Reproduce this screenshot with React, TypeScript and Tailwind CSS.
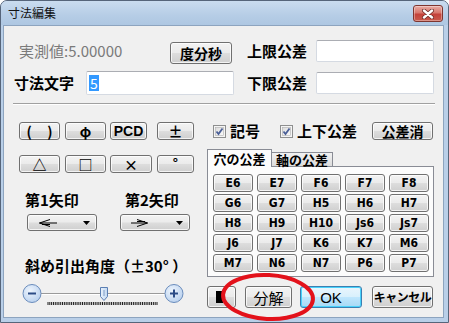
import React from "react";

const btnBg =
  "bg-[linear-gradient(180deg,#f3f3f3_0%,#ebebeb_48%,#dddddd_52%,#cfcfcf_100%)]";

function Btn({
  className = "",
  children,
}: {
  className?: string;
  children?: React.ReactNode;
}) {
  return (
    <div
      className={`flex shrink-0 items-center justify-center rounded-[3px] border border-[#707070] ${btnBg} shadow-[inset_0_0_0_1px_rgba(255,255,255,0.75)] text-black ${className}`}
    >
      {children}
    </div>
  );
}

function Input({ className = "", children }: { className?: string; children?: React.ReactNode }) {
  return (
    <div
      className={`flex shrink-0 items-center rounded-[2px] border border-[#d5dae2] border-t-[#abadb3] bg-white ${className}`}
    >
      {children}
    </div>
  );
}

function Check() {
  return (
    <svg width="13" height="13" viewBox="0 0 13 13" className="shrink-0">
      <defs>
        <linearGradient id="cbg" x1="0" y1="0" x2="1" y2="1">
          <stop offset="0" stopColor="#dcdcdc" />
          <stop offset="1" stopColor="#fbfbfb" />
        </linearGradient>
      </defs>
      <rect x="0.5" y="0.5" width="12" height="12" fill="#f5f5f5" stroke="#8e8f8f" />
      <rect x="2.5" y="2.5" width="8" height="8" fill="url(#cbg)" stroke="#b0b0b0" strokeWidth="0.6" />
      <path d="M3.5 6.5 L5.5 9 L9.5 3.5" fill="none" stroke="#4a5f97" strokeWidth="1.8" />
    </svg>
  );
}

function Dropdown({ dir, className = "" }: { dir: "left" | "right"; className?: string }) {
  return (
    <Btn className={`h-[17px] w-[70px] justify-start ${className}`}>
      <svg width="20" height="10" viewBox="0 0 20 10" className="ml-[10px]">
        {dir === "left" ? (
          <g fill="none" stroke="#000" strokeWidth="1">
            <path d="M12 1.5 L1.5 5 L12 8.5" />
            <path d="M1.5 5 H19" />
            <path d="M4 6.5 H12" />
          </g>
        ) : (
          <g fill="none" stroke="#000" strokeWidth="1">
            <path d="M6 1.5 L16.5 5 L6 8.5" />
            <path d="M0 5 H16.5" />
            <path d="M6 3.5 H14" />
          </g>
        )}
      </svg>
      <svg width="7" height="4" viewBox="0 0 7 4" className="ml-auto mr-[6px]">
        <path d="M0 0 H7 L3.5 4 Z" fill="#000" />
      </svg>
    </Btn>
  );
}

function Slider() {
  const ticks = Array.from({ length: 61 }, (_, i) => 29 + (i * 109) / 60);
  return (
    <svg width="172" height="26" viewBox="0 0 172 26" className="shrink-0">
      <defs>
        <radialGradient id="cg" cx="0.4" cy="0.35" r="0.7">
          <stop offset="0" stopColor="#eef5fd" />
          <stop offset="1" stopColor="#b8d0ee" />
        </radialGradient>
        <linearGradient id="tg" x1="0" y1="0" x2="1" y2="0">
          <stop offset="0" stopColor="#e9f2fc" />
          <stop offset="1" stopColor="#c2d8f1" />
        </linearGradient>
      </defs>
      <line x1="22" y1="11.5" x2="146" y2="11.5" stroke="#9a9a9a" strokeWidth="1" />
      <line x1="22" y1="12.5" x2="146" y2="12.5" stroke="#ffffff" strokeWidth="1" />
      <circle cx="13" cy="11.5" r="9" fill="url(#cg)" stroke="#6a8cbc" strokeWidth="1" />
      <line x1="9" y1="11.5" x2="17" y2="11.5" stroke="#2c4c86" strokeWidth="2" />
      <circle cx="155" cy="11.5" r="9" fill="url(#cg)" stroke="#6a8cbc" strokeWidth="1" />
      <line x1="151" y1="11.5" x2="159" y2="11.5" stroke="#2c4c86" strokeWidth="2" />
      <line x1="155" y1="7.5" x2="155" y2="15.5" stroke="#2c4c86" strokeWidth="2" />
      <path d="M81.5 5.5 H88.5 V14.5 L85 18.5 L81.5 14.5 Z" fill="url(#tg)" stroke="#5b7fb3" strokeWidth="1" />
      <line x1="85" y1="8" x2="85" y2="14" stroke="#7f9cc6" strokeWidth="1" />
      {ticks.map((x, i) => (
        <line key={i} x1={x} y1="20" x2={x} y2="23" stroke="#000" strokeWidth="0.9" />
      ))}
    </svg>
  );
}

const grid = [
  "E6", "E7", "F6", "F7", "F8",
  "G6", "G7", "H5", "H6", "H7",
  "H8", "H9", "H10", "Js6", "Js7",
  "J6", "J7", "K6", "K7", "M6",
  "M7", "N6", "N7", "P6", "P7",
];

export default function App() {
  return (
    <div className="relative h-[323px] w-[449px] overflow-hidden bg-white font-['Noto_Sans_CJK_JP',sans-serif] text-black">
      <div className="flex h-full w-full flex-col rounded-t-[7px] border border-[#56657a] bg-[#b9cfe8]">
        {/* Title bar */}
        <div className="flex h-[24px] shrink-0 items-start rounded-t-[6px] bg-[linear-gradient(180deg,#cadcef_0%,#b6cde6_60%,#aec7e2_100%)] pl-[7px] pr-[5px]">
          <span className="mt-[5px] text-[12px] leading-[14px] text-[#111]">寸法編集</span>
          <div className="ml-auto mt-[4px] flex h-[17px] w-[30px] items-center justify-center rounded-[3px] border border-[#7e352f] bg-[linear-gradient(180deg,#e9aca4_0%,#d8776c_45%,#c4423a_55%,#c95a4c_100%)] shadow-[inset_0_0_0_1px_rgba(255,255,255,0.35)]">
            <svg width="12" height="10" viewBox="0 0 12 10">
              <path d="M2 1.5 L10 8.5 M10 1.5 L2 8.5" stroke="#6b2a24" strokeWidth="4" strokeLinecap="round" />
              <path d="M2 1.5 L10 8.5 M10 1.5 L2 8.5" stroke="#ffffff" strokeWidth="2.4" strokeLinecap="round" />
            </svg>
          </div>
        </div>

        {/* Client area */}
        <div className="mb-[4px] ml-[2px] mr-[4px] flex flex-1 flex-col border border-[#8da4bf] bg-[#f0f0f0]">
          {/* Row 1 */}
          <div className="mt-[14px] flex h-[24px] items-start">
            <div className="ml-[15px] w-[151px] text-[15px] leading-[22px] text-[#7a7a7a]">実測値:5.00000</div>
            <Btn className="mt-[2px] h-[22px] w-[62px] text-[14px] font-bold leading-none">度分秒</Btn>
            <div className="ml-[15px] w-[69px] text-[15px] font-bold leading-[22px]">上限公差</div>
            <Input className="h-[22px] w-[118px]" />
          </div>

          {/* Row 2 */}
          <div className="mt-[6px] flex h-[25px] items-start">
            <div className="ml-[10px] w-[72px] text-[15px] font-bold leading-[25px]">寸法文字</div>
            <Input className="mt-[1px] h-[24px] w-[148px]">
              <span className="ml-[2px] bg-[#3399ff] px-[1px] text-[14px] leading-[16px] text-white">5</span>
            </Input>
            <div className="ml-[13px] w-[69px] text-[15px] font-bold leading-[25px]">下限公差</div>
            <Input className="mt-[2px] h-[22px] w-[118px]" />
          </div>

          {/* Separator */}
          <div className="ml-[9px] mt-[8px] h-[2px] w-[422px] border-b border-t border-b-white border-t-[#a0a0a0]" />

          {/* Body */}
          <div className="mt-[17px] flex">
            {/* Left column */}
            <div className="ml-[15px] flex w-[181px] flex-col">
              <div className="flex h-[18px]">
                <Btn className="h-[18px] w-[41px] text-[14px] font-bold leading-none">
                  <span className="flex w-[26px] justify-between"><span>(</span><span>)</span></span>
                </Btn>
                <Btn className="ml-[5px] h-[18px] w-[41px] text-[14px] font-bold leading-none">φ</Btn>
                <Btn className="ml-[4px] h-[18px] w-[37px] font-['Liberation_Sans',sans-serif] text-[14px] font-bold leading-none">PCD</Btn>
                <Btn className="ml-[10px] h-[18px] w-[37px] text-[14px] font-bold leading-none">±</Btn>
              </div>
              <div className="mt-[15px] flex h-[18px]">
                <Btn className="h-[18px] w-[41px] text-[14px] font-bold leading-none">△</Btn>
                <Btn className="ml-[5px] h-[18px] w-[41px] text-[14px] font-bold leading-none">□</Btn>
                <Btn className="ml-[4px] h-[18px] w-[42px] text-[14px] font-bold leading-none">×</Btn>
                <Btn className="ml-[5px] h-[18px] w-[37px] items-start text-[13px] font-bold leading-[14px]">°</Btn>
              </div>
              <div className="mt-[17px] flex h-[20px] text-[15px] font-bold leading-[20px]">
                <span className="ml-[6px] w-[100px]">第1矢印</span>
                <span>第2矢印</span>
              </div>
              <div className="mt-[4px] flex">
                <Dropdown dir="left" className="ml-[8px]" />
                <Dropdown dir="right" className="ml-[23px]" />
              </div>
              <div className="ml-[6px] mt-[25px] h-[20px] whitespace-nowrap text-[15px] font-bold leading-[20px]">
                斜め引出角度（±30° ）
              </div>
              <div className="mt-[6px] flex">
                <Slider />
              </div>
            </div>

            {/* Right column */}
            <div className="ml-[7px] flex w-[227px] flex-col">
              <div className="flex h-[18px] items-center">
                <div className="ml-[6px] flex items-center">
                  <Check />
                </div>
                <span className="ml-[4px] text-[15px] font-bold leading-[18px]">記号</span>
                <div className="ml-[20px] flex items-center">
                  <Check />
                </div>
                <span className="ml-[4px] text-[15px] font-bold leading-[18px]">上下公差</span>
                <Btn className="ml-[15px] h-[18px] w-[61px] text-[14px] font-bold leading-none">公差消</Btn>
              </div>

              {/* Tabs */}
              <div className="relative z-10 mt-[9px] flex h-[17px] items-end">
                <div className="mb-[-1px] flex h-[18px] w-[65px] items-center justify-center border border-b-0 border-[#898c95] bg-[#fcfcfc] text-[13px] font-bold leading-none">
                  穴の公差
                </div>
                <div className="flex h-[14px] w-[61px] items-center justify-center border border-b-0 border-l-0 border-[#898c95] bg-[linear-gradient(180deg,#f2f2f2,#dcdcdc)] text-[13px] font-bold leading-none">
                  軸の公差
                </div>
              </div>
              <div className="h-[111px] border border-[#898c95] bg-[#fcfcfc] pl-[5px] pt-[7px]">
                <div className="grid grid-cols-[repeat(5,40px)] gap-x-[4px] gap-y-[2px]">
                  {grid.map((g) => (
                    <Btn key={g} className="h-[18px] w-[40px] font-['DejaVu_Sans_Condensed','DejaVu_Sans',sans-serif] text-[12px] font-bold leading-none">
                      {g}
                    </Btn>
                  ))}
                </div>
              </div>

              {/* Bottom buttons */}
              <div className="mt-[9px] flex h-[22px]">
                <Btn className="h-[22px] w-[29px]">
                  <div className="mr-[4px] h-[12px] w-[7px] bg-black" />
                </Btn>
                <Btn className="ml-[9px] h-[22px] w-[47px] text-[15px] leading-none">分解</Btn>
                <div className="ml-[8px] flex h-[22px] w-[62px] items-center justify-center rounded-[3px] border border-[#3c7fb1] bg-[linear-gradient(180deg,#eaf6fd_0%,#d9f0fc_48%,#bee6fd_52%,#a7d9f5_100%)] shadow-[inset_0_0_0_1px_#48d2fb] font-['Liberation_Sans',sans-serif] text-[15px] leading-none">
                  OK
                </div>
                <Btn className="ml-[10px] h-[22px] w-[61px] text-[12px] font-bold leading-none tracking-[-0.5px]">キャンセル</Btn>
              </div>
            </div>
          </div>
        </div>
      </div>

      {/* Red annotation ellipse */}
      <svg className="pointer-events-none absolute left-0 top-0" width="449" height="323" viewBox="0 0 449 323">
        <ellipse cx="268" cy="297" rx="45" ry="22" fill="none" stroke="#e3121b" strokeWidth="4" transform="rotate(3 268 297)" />
      </svg>
    </div>
  );
}
